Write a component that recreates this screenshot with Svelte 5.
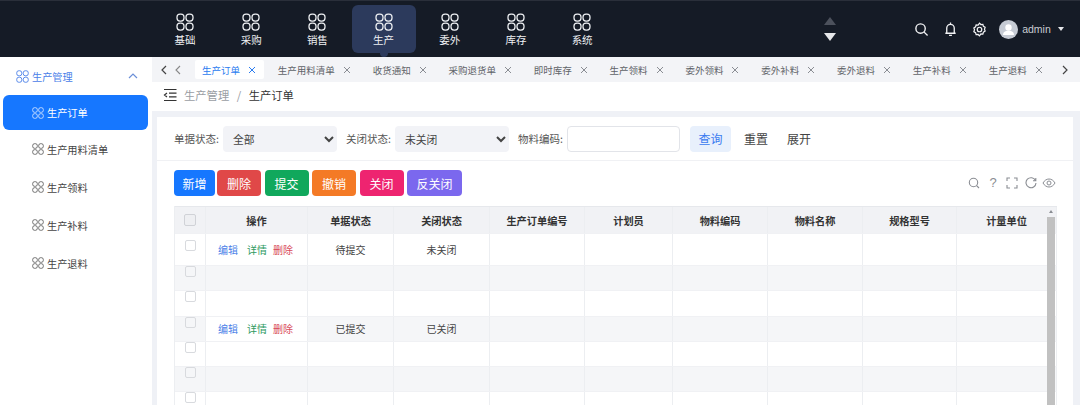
<script>
  const menus = ['基础','采购','销售','生产','委外','库存','系统'];
  const tabs = ['生产订单','生产用料清单','收货通知','采购退货单','即时库存','生产领料','委外领料','委外补料','委外退料','生产补料','生产退料'];
  const side = ['生产订单','生产用料清单','生产领料','生产补料','生产退料'];
  const btns = [['新增','b1'],['删除','b2'],['提交','b3'],['撤销','b4'],['关闭','b5'],['反关闭','b6']];
  const cols = ['操作','单据状态','关闭状态','生产订单编号','计划员','物料编码','物料名称','规格型号','计量单位'];
  const rows = [
    { cls:'r0', s:'待提交', c:'未关闭', op:true },
    { cls:'r1 gray' },
    { cls:'r2' },
    { cls:'r3 gray opwhite', s:'已提交', c:'已关闭', op:true },
    { cls:'r4' },
    { cls:'r5 gray' },
    { cls:'r6' }
  ];
</script>

{#snippet grid(size)}
  <svg class="grid" width={size} height={size} viewBox="0 0 18 18" fill="none" stroke="currentColor" stroke-width="1.25">
    <rect x="1" y="1" width="7" height="7" rx="3"/><rect x="10" y="1" width="7" height="7" rx="3"/>
    <rect x="1" y="10" width="7" height="7" rx="3"/><rect x="10" y="10" width="7" height="7" rx="3"/>
  </svg>
{/snippet}

<div class="page">
  <header class="top">
    <nav class="menus">
      {#each menus as m}
        <div class="menu" class:active={m === '生产'}>
          {@render grid(18)}
          <span>{m}</span>
        </div>
      {/each}
    </nav>
    <div class="updown"><i class="up"></i><i class="down"></i></div>
    <div class="tools">
      <svg width="15" height="15" viewBox="0 0 16 16" fill="none" stroke="#f2f3f5" stroke-width="1.5"><circle cx="7" cy="7" r="5"/><path d="M10.800 10.800L14.500 14.500"/></svg>
      <svg width="15" height="16" viewBox="0 0 16 16" fill="none" stroke="#f2f3f5" stroke-width="1.4"><path d="M8 1v1.500M4 12V7a4 4 0 018 0v5M2.500 12.500h11M6.500 14.800h3"/></svg>
      <svg width="15" height="15" viewBox="0 0 16 16" fill="none" stroke="#f2f3f5" stroke-width="1.3"><path d="M8 1.200l1.500 1.500 2.100-.1.600 2 1.800 1.100-.7 2 .7 2-1.800 1.100-.6 2-2.100-.1L8 14.800l-1.500-1.500-2.100.1-.6-2-1.800-1.100.7-2-.7-2 1.800-1.100.6-2 2.100.1z"/><circle cx="8" cy="8" r="2.400"/></svg>
      <div class="user">
        <span class="avatar"><svg width="19" height="19" viewBox="0 0 19 19" fill="#fff"><circle cx="9.500" cy="7.500" r="3.200"/><path d="M4 15c0-3 2.500-4.200 5.500-4.200S15 12 15 15z"/></svg></span>
        <span class="name">admin</span>
        <i class="caret"></i>
      </div>
    </div>
  </header>

  <div class="body">
    <aside class="side">
      <div class="side-title">
        {@render grid(13)}
        <span>生产管理</span>
        <svg class="chev" width="10" height="6" viewBox="0 0 10 6" fill="none" stroke="#6b8fd8" stroke-width="1.2"><path d="M1 5l4-4 4 4"/></svg>
      </div>
      {#each side as s, i}
        <div class="side-item" class:on={i === 0}>
          {@render grid(12)}
          <span>{s}</span>
        </div>
      {/each}
    </aside>

    <main class="main">
      <div class="tabs">
        <span class="arrows"><svg width="6" height="10" viewBox="0 0 6 10" fill="none" stroke="#444" stroke-width="1.2"><path d="M5 1L1 5l4 4"/></svg><svg width="6" height="10" viewBox="0 0 6 10" fill="none" stroke="#888" stroke-width="1.1"><path d="M5 1L1 5l4 4"/></svg></span>
        <div class="tablist">
          {#each tabs as t, i}
            <div class="tab" class:on={i === 0}>
              <span>{t}</span>
              <svg width="8" height="8" viewBox="0 0 8 8" fill="none" stroke="currentColor" stroke-width="1"><path d="M1 1l6 6M7 1L1 7"/></svg>
            </div>
          {/each}
        </div>
        <svg class="next" width="6" height="10" viewBox="0 0 6 10" fill="none" stroke="#444" stroke-width="1.2"><path d="M1 1l4 4-4 4"/></svg>
      </div>

      <div class="crumbs">
        <svg width="14" height="14" viewBox="0 0 14 14" fill="none" stroke="#333" stroke-width="1.2"><path d="M1 1.500h12.500M6 5.200h7.500M6 8.800h7.500M1 12.500h12.500M4 5L1.500 7 4 9"/></svg>
        <span class="c1">生产管理</span>
        <span class="sep">/</span>
        <span class="c2">生产订单</span>
      </div>

      <section class="card">
        <div class="filter">
          <label for="s1">单据状态:</label>
          <select id="s1"><option>全部</option></select>
          <label for="s2">关闭状态:</label>
          <select id="s2"><option>未关闭</option></select>
          <label for="s3">物料编码:</label>
          <input id="s3" />
          <button class="query">查询</button>
          <button class="plain">重置</button>
          <button class="plain">展开</button>
        </div>

        <div class="actions">
          <div class="btns">
            {#each btns as [t, c]}
              <button class="act {c}">{t}</button>
            {/each}
          </div>
          <div class="icons">
            <svg width="12" height="12" viewBox="0 0 12 12" fill="none" stroke="#8a8d93" stroke-width="1.1"><circle cx="5.500" cy="5.500" r="4.200"/><path d="M8.600 8.600L11 11"/></svg>
            <span class="q">?</span>
            <svg width="12" height="12" viewBox="0 0 12 12" fill="none" stroke="#8a8d93" stroke-width="1.1"><path d="M1 4V1h3M8 1h3v3M11 8v3H8M4 11H1V8"/></svg>
            <svg width="12" height="12" viewBox="0 0 12 12" fill="none" stroke="#8a8d93" stroke-width="1.1"><path d="M10.500 3.500A5 5 0 1011 6M10.800 1v2.800H8"/></svg>
            <svg class="eye" width="14" height="12" viewBox="0 0 14 12" fill="none" stroke="#8a8d93" stroke-width="1"><path d="M1 6c1.500-2.600 3.600-4 6-4s4.500 1.400 6 4c-1.500 2.600-3.600 4-6 4S2.500 8.600 1 6z"/><circle cx="7" cy="6" r="2"/></svg>
          </div>
        </div>

        <div class="table">
          <div class="row head">
            <div class="cell"><i class="cb"></i></div>
            {#each cols as c}<div class="cell">{c}</div>{/each}
          </div>
          {#each rows as r}
            <div class="row {r.cls}">
              <div class="cell cbcell"><i class="cb"></i></div>
              <div class="cell opcell">
                {#if r.op}
                  <span class="edit">编辑</span><span class="detail">详情</span><span class="del">删除</span>
                {/if}
              </div>
              <div class="cell">{r.s ?? ''}</div>
              <div class="cell">{r.c ?? ''}</div>
              {#each Array(6) as _}<div class="cell"></div>{/each}
            </div>
          {/each}
          <div class="scroll"><i class="sarrow"></i><i class="thumb"></i></div>
        </div>
      </section>
    </main>
  </div>
</div>

<style>
  :global(body) { margin: 0; }
  .page {
    width: 1080px; height: 405px; overflow: hidden; display: flex; flex-direction: column;
    font-family: "Noto Sans CJK SC", "Liberation Sans", sans-serif; background: #eff1f6; color: #333;
  }
  .top { height: 57px; flex: none; background: #151b26; display: flex; align-items: center; position: relative; box-sizing: border-box; border-top: 1px solid #2a2f3a; }
  .menus { display: flex; margin-left: 153px; gap: 2.200px; align-self: flex-start; }
  .menu { width: 64px; height: 48px; margin-top: 4px; border-radius: 6px; display: flex; flex-direction: column; align-items: center; color: #eef0f3; font-size: 10.500px; line-height: 14px; padding-top: 8px; box-sizing: border-box; position: relative; }
  .menu span { margin-top: 2px; }
  .menu.active { background: #2c3a5c; }
  .menu.active::after { content: ""; position: absolute; left: 28px; bottom: -4px; width: 8px; height: 8px; border-radius: 50%; background: #2c3a5c; }
  .updown { margin-left: 210px; display: flex; flex-direction: column; gap: 8px; }
  .updown i { display: block; width: 0; height: 0; border-left: 6px solid transparent; border-right: 6px solid transparent; }
  .up { border-bottom: 8px solid #4c515c; }
  .down { border-top: 8px solid #e6e7ea; }
  .tools { margin-left: 78px; display: flex; align-items: center; gap: 14px; }
  .user { display: flex; align-items: center; margin-left: -2px; }
  .avatar { width: 19px; height: 19px; border-radius: 50%; background: #c6cbd4; display: block; overflow: hidden; }
  .avatar svg { display: block; }
  .name { font-family: "Liberation Sans", sans-serif; font-size: 10.500px; color: #c9ccd2; margin-left: 4px; }
  .caret { width: 0; height: 0; border-left: 3px solid transparent; border-right: 3px solid transparent; border-top: 4px solid #e6e7ea; margin-left: 7px; }

  .body { flex: 1; display: flex; min-height: 0; }
  .side { width: 152px; flex: none; background: #fff; padding: 0 4px 0 3px; box-sizing: border-box; }
  .side-title { height: 38px; display: flex; align-items: center; color: #4a80e8; font-size: 10.200px; padding-left: 13px; }
  .side-title span { margin-left: 3px; }
  .chev { margin-left: auto; margin-right: 10px; }
  .side-item { height: 38px; display: flex; align-items: center; padding-left: 29px; font-size: 10.200px; color: #444; border-radius: 6px; }
  .side-item span { margin-left: 3px; }
  .side-item .grid { color: #555; }
  .side-item.on { background: #1677ff; color: #fff; height: 35px; }
  .side-item.on .grid { color: #dfeaff; }

  .main { flex: 1; min-width: 0; display: flex; flex-direction: column; }
  .tabs { height: 25px; flex: none; background: #f3f4f7; display: flex; align-items: center; position: relative; }
  .arrows { display: flex; gap: 8px; padding-left: 9px; width: 34px; box-sizing: border-box; flex: none; }
  .tablist { display: flex; gap: 6.800px; margin-left: 9px; white-space: nowrap; }
  .tab { display: flex; align-items: center; gap: 8px; height: 19px; padding: 0 8px 0 7px; font-size: 9.500px; color: #5f6368; border-radius: 2px; }
  .tab svg { color: #8a8d93; }
  .tab.on { background: #fff; color: #2b7cf0; }
  .tab.on svg { color: #2b7cf0; }
  .next { position: absolute; right: 12px; top: 8px; }

  .crumbs { height: 29px; flex: none; background: #fff; display: flex; align-items: center; padding: 0 0 3px 11px; box-sizing: border-box; font-size: 11.300px; }
  .c1 { color: #9a9da3; margin-left: 7px; }
  .sep { color: #9a9da3; margin: 0 7.500px; }
  .c2 { color: #333; }

  .card { margin: 6px 7px 0 5px; background: #fff; flex: 1; min-height: 0; }
  .filter { height: 44px; display: flex; align-items: center; padding-left: 17px; border-bottom: 1px solid #f0f1f4; box-sizing: border-box; font-size: 10.500px; color: #555; }
  .filter label { width: 44px; white-space: nowrap; }
  .filter select { width: 114px; height: 26px; margin: 0 9px 0 5px; border: none; border-radius: 4px; background: #f2f3f7; color: #444; font: inherit; font-size: 10.800px; padding: 0 6px; box-sizing: border-box; }
  .filter input { width: 113px; height: 26px; margin-left: 5px; border: 1px solid #e2e4e9; border-radius: 4px; box-sizing: border-box; background: #fff; }
  .filter button { font-family: inherit; font-size: 12px; border: none; cursor: pointer; height: 26px; }
  .query { width: 41px; margin-left: 10px; background: #e8f0fc; color: #3a7af0; border-radius: 4px; }
  .plain { background: transparent; color: #444; padding: 0; width: 24px; margin-left: 13px; }
  .plain + .plain { margin-left: 19px; }

  .actions { display: flex; align-items: center; justify-content: space-between; padding: 9px 17px 0 17px; height: 26px; }
  .btns { display: flex; gap: 3.500px; }
  .act { height: 26px; border: none; border-radius: 4px; color: #fff; font-family: inherit; font-size: 12px; padding: 0; width: 44px; }
  .b1 { background: #1677ff; width: 41px; margin-right: -1.500px; }
  .b2 { background: #e04848; }
  .b3 { background: #10a85c; }
  .b4 { background: #f47a26; }
  .b5 { background: #ee2470; }
  .b6 { background: #7b68ee; width: 55px; }
  .icons { display: flex; align-items: center; gap: 7px; color: #8a8d93; }
  .eye { margin-left: -2px; }
  .q { font-family: "Liberation Sans", sans-serif; font-size: 13px; width: 12px; text-align: center; line-height: 12px; }

  .table { position: relative; margin: 10px 16px 0 17px; border-left: 1px solid #eceef1; }
  .row { display: grid; grid-template-columns: 31px 102px 86px 96px 95px 88px 95px 95px 94px 100px; font-size: 10px; color: #444; border-bottom: 1px solid #f0f1f4; box-sizing: border-box; height: 25.300px; }
  .cell { display: flex; align-items: center; justify-content: center; border-right: 1px solid #eceef1; min-width: 0; }
  .head { height: 28px; background: #f1f2f5; font-size: 10.200px; font-weight: 700; color: #333; border-top: 1px solid #e6e8ec; }
  .r0 { height: 32px; }
  .gray .cell { background: #f5f6f8; }
  .opwhite .opcell { background: #fff; }
  .cb { display: block; width: 11px; height: 11px; border: 1px solid #d8dade; border-radius: 2px; background: #fff; box-sizing: border-box; }
  .head .cb { width: 12px; height: 12px; background: #eeeff2; border-color: #d0d2d7; }
  .cbcell { align-items: flex-start; }
  .r0 .cbcell { padding-top: 6px; }
  .gray .cb { background: #f5f6f8; }
  .opcell { justify-content: flex-start; padding-left: 12px; }
  .edit { color: #4a80e8; width: 29px; }
  .detail { color: #2e9a62; width: 26px; }
  .del { color: #d84a5a; }
  .scroll { position: absolute; right: 2px; top: 1px; bottom: 0; width: 8px; }
  .sarrow { display: block; width: 0; height: 0; margin: 3px auto 0; border-left: 2.500px solid transparent; border-right: 2.500px solid transparent; border-bottom: 3px solid #8a8d93; }
  .thumb { display: block; position: absolute; top: 10px; left: 0; right: 0; height: 200px; background: #c1c1c1; }
</style>
